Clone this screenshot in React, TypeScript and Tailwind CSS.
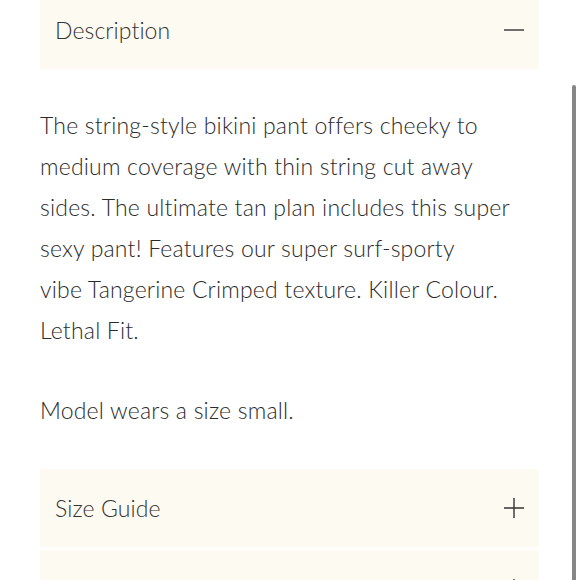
import React from 'react';

const lines1 = [
  'The string-style bikini pant offers cheeky to',
  'medium coverage with thin string cut away',
  'sides. The ultimate tan plan includes this super',
  'sexy pant! Features our super surf-sporty',
  'vibe Tangerine Crimped texture. Killer Colour.',
  'Lethal Fit.',
];

function Minus() {
  return (
    <svg width="22" height="22" viewBox="0 0 22 22" className="text-[#333]">
      <path d="M1 11h20" stroke="currentColor" strokeWidth="1.4" />
    </svg>
  );
}

function Plus() {
  return (
    <svg width="22" height="22" viewBox="0 0 22 22" className="text-[#333]">
      <path d="M1 11h20M11 1v20" stroke="currentColor" strokeWidth="1.4" />
    </svg>
  );
}

function Header({ title, open }: { title: string; open?: boolean }) {
  return (
    <div className="flex h-[78px] items-center justify-between bg-[#fdfaf2] pl-[15px] pr-[14px]">
      <span className="text-[23px] font-light tracking-[0.1px] text-[#333]">{title}</span>
      {open ? <Minus /> : <Plus />}
    </div>
  );
}

export default function App() {
  return (
    <div className="relative h-[580px] w-[580px] overflow-hidden bg-white" style={{ fontFamily: 'Lato, "Open Sans", sans-serif' }}>
      <div className="-mt-[9px] ml-[40px] w-[499px]">
        <Header title="Description" open />
        <div className="pt-[36px] pb-[38px] text-[23px] leading-[41px] font-light tracking-[0.2px] text-[#2b2b2b]">
          <p className="whitespace-nowrap">
            {lines1.map((l, i) => (
              <span key={i} className="block">{l}</span>
            ))}
          </p>
          <p className="mt-[39px]">Model wears a size small.</p>
        </div>
        <Header title="Size Guide" />
        <div className="mt-[3px]">
          <Header title="Care Instructions" />
        </div>
      </div>
      <div className="absolute right-[4px] top-[85px] h-[520px] w-[4px] rounded-full bg-[#868686]" />
    </div>
  );
}
